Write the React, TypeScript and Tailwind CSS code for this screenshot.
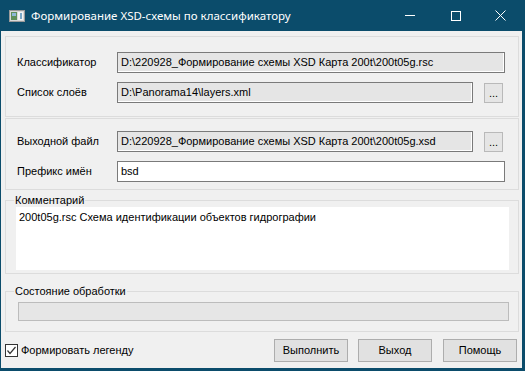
export default function App() {
  const roInput =
    "h-[21px] border border-[#7a7a7a] bg-[#e5e5e5] shadow-[inset_-1px_-1px_0_#ffffff] flex items-center pl-[3px] whitespace-nowrap overflow-hidden";
  const btn =
    "w-[74px] h-[23px] border border-[#adadad] bg-[#e1e1e1] flex items-center justify-center";
  const dots =
    "w-[19px] h-[20px] border border-[#b9b9b9] bg-[#e5e5e5] flex items-end justify-center pb-[3px] leading-none ml-[11px]";
  return (
    <div className="w-[525px] h-[371px] bg-[#0b4c6b] flex flex-col pl-[1px] pr-[3px] pb-[3px] font-['Liberation_Sans',Arial,sans-serif] text-[11px] text-[#000000]">
      {/* Title bar */}
      <div className="h-[31px] flex items-center text-white shrink-0">
        <svg width="16" height="12" viewBox="0 0 16 12" className="ml-[8px] mr-[6px]">
          <rect x="0.5" y="0.5" width="15" height="11" fill="#d9d9d9" stroke="#9a9a9a" />
          <rect x="2" y="2" width="6" height="8" fill="#5f8f5a" />
          <rect x="3" y="3" width="4" height="3" fill="#8fb8d8" />
          <rect x="9" y="2" width="5" height="8" fill="#f4f4f4" />
          <rect x="11" y="3" width="2" height="6" fill="#7aa7c7" />
        </svg>
        <span className="text-[11.5px] font-['Noto_Sans',sans-serif]">Формирование XSD-схемы по классификатору</span>
        <div className="ml-auto flex h-full">
          <div className="w-[46px] h-full flex items-center justify-center">
            <div className="w-[10px] h-[1px] bg-white" />
          </div>
          <div className="w-[46px] h-full flex items-center justify-center">
            <div className="w-[10px] h-[10px] border border-white" />
          </div>
          <div className="w-[43px] h-full flex items-center justify-center">
            <svg width="11" height="11" viewBox="0 0 11 11">
              <path d="M0.5 0.5 L10.5 10.5 M10.5 0.5 L0.5 10.5" stroke="white" strokeWidth="1" />
            </svg>
          </div>
        </div>
      </div>

      {/* Client */}
      <div className="flex-1 bg-[#f0f0f0] flex flex-col pl-[4px] pr-[3px] pt-[5px]">
        {/* Group 1 */}
        <div className="h-[81px] w-[514px] border border-[#dcdcdc] pt-[15px] pl-[11px] flex flex-col">
          <div className="flex items-center">
            <div className="w-[100px]">Классификатор</div>
            <div className={roInput + " w-[388px]"}>D:\220928_Формирование схемы XSD Карта 200t\200t05g.rsc</div>
          </div>
          <div className="flex items-center mt-[9px]">
            <div className="w-[100px]">Список слоёв</div>
            <div className={roInput + " w-[356px]"}>D:\Panorama14\layers.xml</div>
            <div className={dots}>...</div>
          </div>
        </div>

        {/* Group 2 */}
        <div className="h-[72px] w-[514px] mt-[1px] border border-[#dcdcdc] pt-[12px] pl-[11px] flex flex-col">
          <div className="flex items-center">
            <div className="w-[100px]">Выходной файл</div>
            <div className={roInput + " w-[356px]"}>D:\220928_Формирование схемы XSD Карта 200t\200t05g.xsd</div>
            <div className={dots}>...</div>
          </div>
          <div className="flex items-center mt-[9px]">
            <div className="w-[100px]">Префикс имён</div>
            <div className="h-[21px] w-[388px] border border-[#7a7a7a] bg-white flex items-center pl-[3px]">bsd</div>
          </div>
        </div>

        {/* Comment */}
        <fieldset className="w-[514px] mt-[3px] border border-[#dcdcdc] pl-[10px] pr-[9px] pb-[3px]">
          <legend className="-ml-[2px] px-[1px] h-[14px] leading-[14px]">Комментарий</legend>
          <div className="h-[63px] w-[493px] bg-white pl-[3px] pt-[2px]">200t05g.rsc Схема идентификации объектов гидрографии</div>
        </fieldset>

        {/* Status */}
        <fieldset className="w-[514px] mt-[10px] border border-[#dcdcdc] pl-[12px] pb-[10px]">
          <legend className="-ml-[4px] px-[1px] h-[14px] leading-[14px]">Состояние обработки</legend>
          <div className="mt-[4px] h-[19px] w-[491px] border border-[#bcbcbc] bg-[#e6e6e6]" />
        </fieldset>

        {/* Bottom row */}
        <div className="flex items-center mt-[7px] mr-[2px]">
          <div className="flex items-center">
            <div className="w-[13px] h-[13px] border border-[#333333] bg-white flex items-center justify-center">
              <svg width="11" height="11" viewBox="0 0 11 11">
                <path d="M1.5 5.5 L4 8.5 L9.5 2" stroke="#333333" strokeWidth="1.2" fill="none" />
              </svg>
            </div>
            <span className="ml-[3px]">Формировать легенду</span>
          </div>
          <div className="ml-auto flex">
            <div className={btn}>Выполнить</div>
            <div className={btn + " ml-[10px]"}>Выход</div>
            <div className={btn + " ml-[11px]"}>Помощь</div>
          </div>
        </div>
      </div>
    </div>
  );
}
